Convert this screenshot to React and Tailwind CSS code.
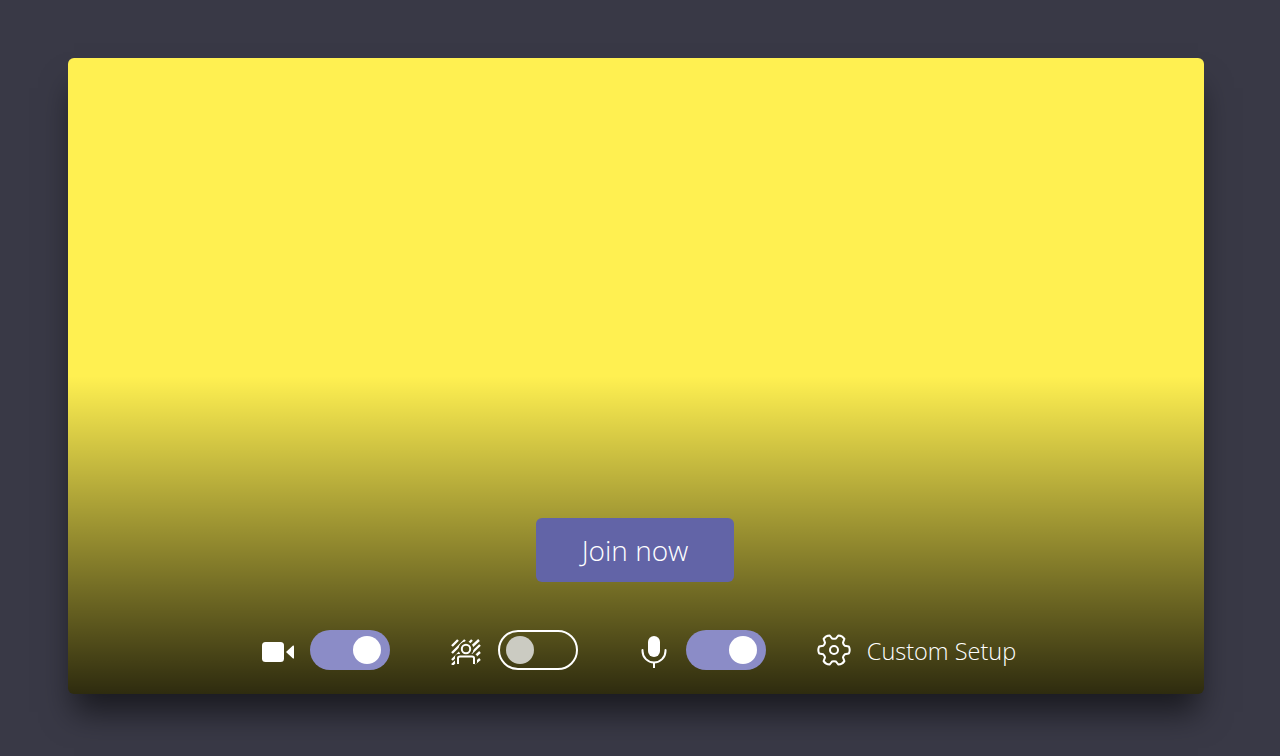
const Toggle = ({ on }) => (
  <div className={`w-20 h-10 rounded-full flex items-center ${on ? "bg-[#8b8cc7] justify-end pr-[9px]" : "border-2 border-white justify-start pl-[6px]"}`}>
    <div className={`w-7 h-7 rounded-full ${on ? "bg-white" : "bg-[#cbcbc2]"}`}></div>
  </div>
);

const CameraIcon = () => (
  <svg width="32" height="20" viewBox="0 0 32 20" fill="white">
    <rect x="0" y="0" width="22" height="20" rx="3.5" />
    <path d="M24 10 L31 3.5 Q32 3 32 4.5 V15.5 Q32 17 31 16.5 Z" />
  </svg>
);

const BackgroundIcon = () => (
  <svg width="30" height="26" viewBox="0 0 30 26" fill="none" stroke="white">
    <mask id="hatch-cut">
      <rect width="30" height="26" fill="white" stroke="none" />
      <circle cx="15" cy="10" r="7.5" fill="black" stroke="none" />
      <rect x="4" y="15" width="22" height="11" rx="3" fill="black" stroke="none" />
    </mask>
    <g strokeWidth="2.4" mask="url(#hatch-cut)">
      <path d="M1 7 L7 1 M1 14 L14 1 M1 21 L21 1 M1 26 L28 1 M8 26 L29 6 M15 26 L29 13 M22 26 L29 20" />
    </g>
    <circle cx="15" cy="10" r="4.2" strokeWidth="2" />
    <path d="M7 25 V19 Q7 17.5 9 17.5 H21 Q23 17.5 23 19 V25" strokeWidth="2" />
  </svg>
);

const MicIcon = () => (
  <svg width="26" height="32" viewBox="0 0 26 32" fill="none">
    <rect x="7" y="0" width="12" height="21" rx="6" fill="white" />
    <path d="M1.5 14 V15 A11.5 11.5 0 0 0 24.5 15 V14" stroke="white" strokeWidth="2" strokeLinecap="round" />
    <path d="M13 26 V32" stroke="white" strokeWidth="2" />
  </svg>
);

// six fat teeth, with one pointing left and one right
const polar = (r, deg) => {
  const a = (deg * Math.PI) / 180;
  return `${(17 + r * Math.cos(a)).toFixed(2)} ${(17 + r * Math.sin(a)).toFixed(2)}`;
};
const gearPath =
  [0, 60, 120, 180, 240, 300]
    .map((a, i) => {
      const start = `${i === 0 ? "M" : "L"}${polar(15.2, a - 13)}`;
      return `${start} Q${polar(16.6, a)} ${polar(15.2, a + 13)} L${polar(11.6, a + 21)} Q${polar(10.8, a + 30)} ${polar(11.6, a + 39)}`;
    })
    .join(" ") + " Z";

const GearIcon = () => (
  <svg width="34" height="34" viewBox="0 0 34 34" fill="none" stroke="white" strokeWidth="2" strokeLinejoin="round">
    <path d={gearPath} />
    <circle cx="17" cy="17" r="4" />
  </svg>
);

const App = () => {
  return (
    <div className="w-[1280px] h-[756px] bg-[#393946] pt-[58px] pl-[68px] overflow-hidden" style={{ fontFamily: '"Open Sans", sans-serif' }}>
      <div className="w-[1136px] h-[636px] rounded-md bg-[#fff051] bg-[linear-gradient(to_bottom,transparent_50%,rgba(0,0,0,0.82)_100%)] shadow-[0_24px_30px_-6px_rgba(0,0,0,0.55)] flex flex-col items-center justify-end pb-6 text-white">
        <button className="w-[198px] h-16 mb-12 mr-[2px] rounded-md bg-[#6264a7] text-[28px] font-[350] text-white">Join now</button>
        <div className="flex items-center h-10 ml-[6px]">
          <div className="mt-[4px]"><CameraIcon /></div>
          <div className="ml-4"><Toggle on /></div>
          <div className="ml-[61px] mt-[4px]"><BackgroundIcon /></div>
          <div className="ml-[17px]"><Toggle /></div>
          <div className="ml-[63px] mt-[4px]"><MicIcon /></div>
          <div className="ml-[19px]"><Toggle on /></div>
          <div className="ml-[51px]"><GearIcon /></div>
          <span className="ml-[16px] mt-[4px] text-[23.5px] font-[350]">Custom Setup</span>
        </div>
      </div>
    </div>
  );
};

export default App;
